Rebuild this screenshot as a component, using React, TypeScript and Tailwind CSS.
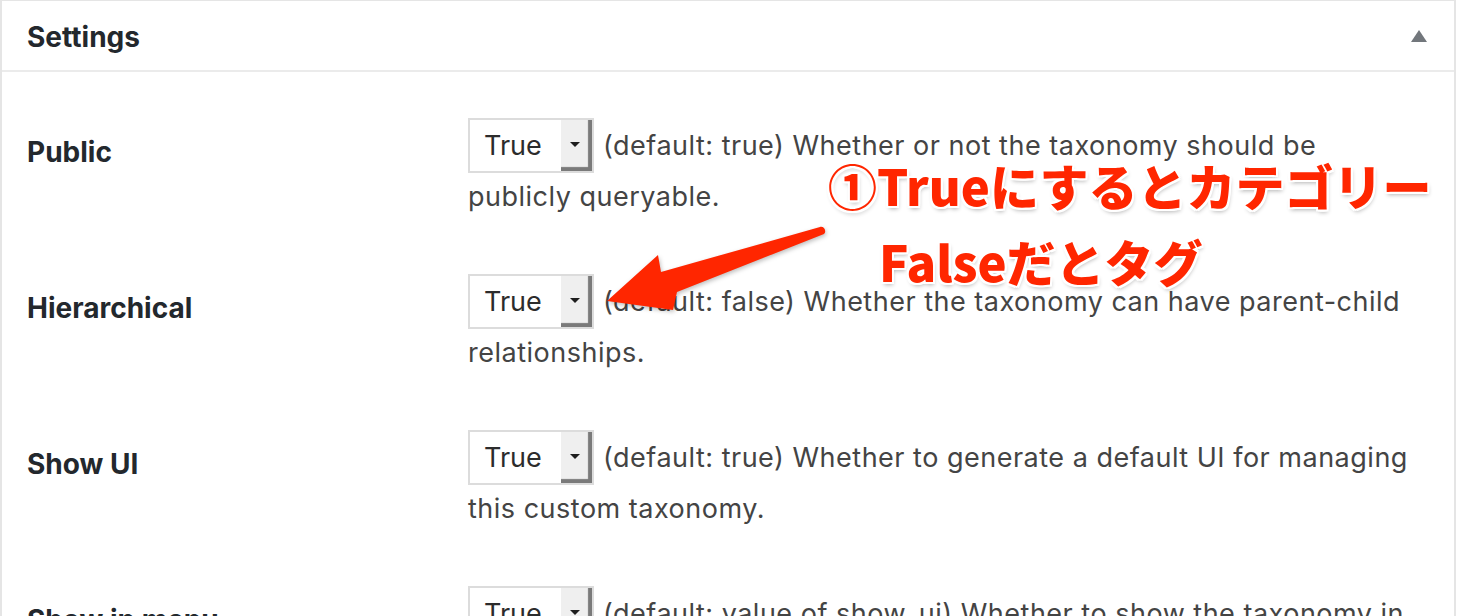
import type { ReactNode } from "react";

const rows: { label: string; lines: string[] }[] = [
  { label: "Public", lines: ["(default: true) Whether or not the taxonomy should be", "publicly queryable."] },
  { label: "Hierarchical", lines: ["(default: false) Whether the taxonomy can have parent-child", "relationships."] },
  { label: "Show UI", lines: ["(default: true) Whether to generate a default UI for managing", "this custom taxonomy."] },
  { label: "Show in menu", lines: ["(default: value of show_ui) Whether to show the taxonomy in", "the admin menu."] },
];

function SelectBox() {
  return (
    <span className="inline-flex h-[55px] w-[126px] border-2 border-[#dcdcdc] bg-white align-top mt-[-2px] mb-[-2px] mr-[9px] tracking-normal">
      <span className="flex-1 pl-[14px] text-[27px] leading-[51px] text-[#2c2c2c]">True</span>
      <span className="flex w-[31px] items-center justify-center bg-[#efefef] shadow-[inset_-4px_-4px_1px_#7a7a7a]">
        <span className="mr-[4px] mb-[3px] h-0 w-0 border-x-[5px] border-t-[5px] border-x-transparent border-t-[#1e1e1e]" />
      </span>
    </span>
  );
}

function Row({ label, children }: { label: string; children: ReactNode }) {
  return (
    <div className="flex">
      <div className="w-[466px] shrink-0 pl-[25px] pt-[18px] text-[28px] font-bold leading-[32px] text-[#23282d]">{label}</div>
      <div className="pt-[2px] text-[27px] leading-[51px] tracking-[0.5px] text-[#444] whitespace-nowrap">{children}</div>
    </div>
  );
}

function Arrow() {
  return (
    <svg className="absolute left-[600px] top-[222px] drop-shadow-[1px_2px_2px_rgba(0,0,0,0.25)]" width="230" height="95" viewBox="600 222 230 95">
      <path
        d="M820 227 C824 226 827 231 824 234 L677 292 L673 310 L607 301 L658 255 L661 272 Z"
        fill="#ff2600"
      />
    </svg>
  );
}

const note =
  "absolute font-['Noto_Sans_CJK_JP',sans-serif] text-[49px] font-black leading-[58px] text-[#ff2600] [text-shadow:0_0_2px_#fff,2px_0_0_#fff,-2px_0_0_#fff,0_2px_0_#fff,0_-2px_0_#fff,2px_2px_0_#fff,-2px_-2px_0_#fff,2px_-2px_0_#fff,-2px_2px_0_#fff,1px_3px_4px_rgba(0,0,0,0.3)]";

export default function App() {
  return (
    <div className="relative h-[616px] w-[1458px] overflow-hidden bg-white font-['Inter','Liberation_Sans',sans-serif]">
      <div className="w-[1456px] border-x-2 border-t border-[#e5e5e5] bg-white">
        <div className="flex h-[71px] items-center justify-between border-b-2 border-[#ebebeb] pl-[25px] pr-[27px]">
          <h2 className="pt-[2px] text-[28px] font-bold text-[#23282d]">Settings</h2>
          <span className="h-0 w-0 border-x-[8px] border-b-[12px] border-x-transparent border-b-[#72777c]" />
        </div>
        <div className="flex flex-col gap-[52px] pt-[46px]">
          {rows.map((r) => (
            <Row key={r.label} label={r.label}>
              <SelectBox />
              {r.lines[0]}
              <br />
              {r.lines[1]}
            </Row>
          ))}
        </div>
      </div>

      <Arrow />

      <div className={`${note} left-[828px] top-[156px]`}>①Trueにするとカテゴリー</div>
      <div className={`${note} left-[879px] top-[232px]`}>Falseだとタグ</div>
    </div>
  );
}
